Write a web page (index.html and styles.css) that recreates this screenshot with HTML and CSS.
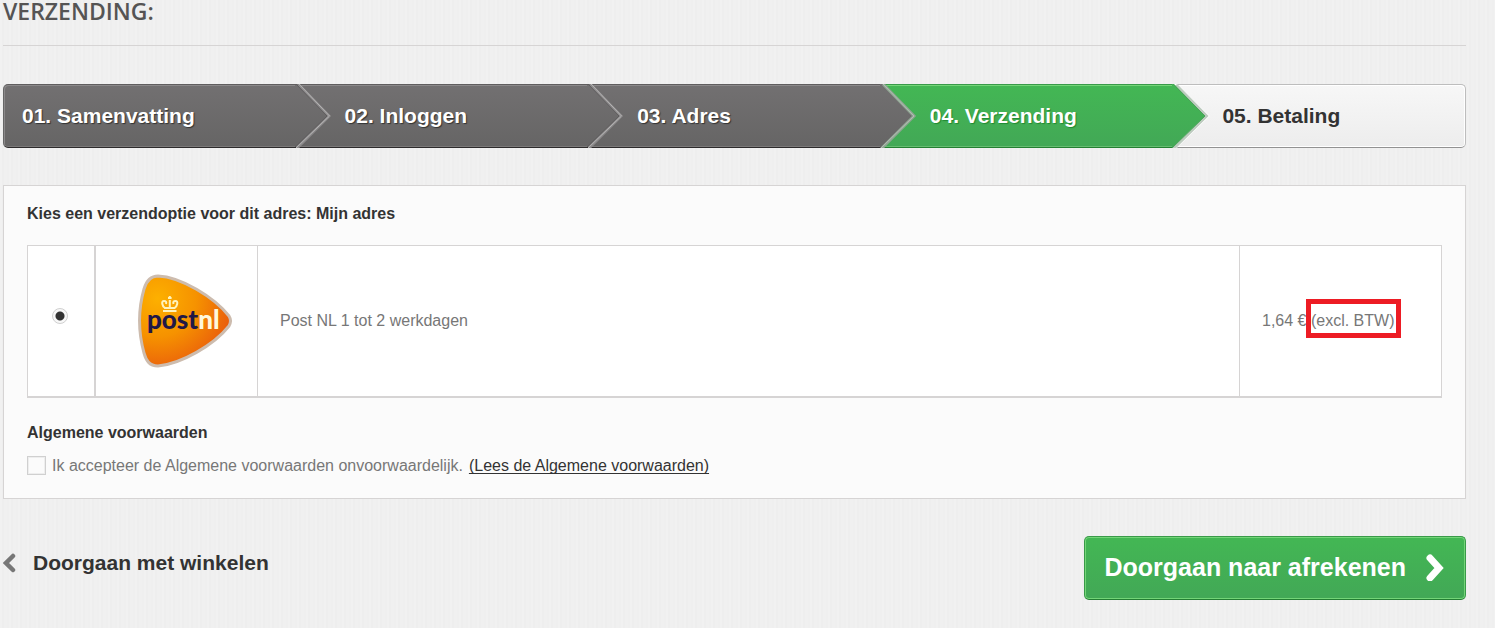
FILE: index.html
```
<!DOCTYPE html>
<html lang="nl">
<head>
<meta charset="utf-8">
<meta name="viewport" content="width=device-width, initial-scale=1">
<title>Verzending</title>
<link rel="stylesheet" href="styles.css">
</head>
<body>
<svg class="defs" width="0" height="0" aria-hidden="true">
  <defs>
    <linearGradient id="gray" x1="0" y1="0" x2="0" y2="1"><stop offset="0" stop-color="#727071"/><stop offset="1" stop-color="#666565"/></linearGradient>
    <linearGradient id="green" x1="0" y1="0" x2="0" y2="1"><stop offset="0" stop-color="#43b754"/><stop offset="1" stop-color="#42a856"/></linearGradient>
  </defs>
</svg>
<main class="page">
  <h1 class="page-title">Verzending:</h1>

  <ol class="steps">
    <li class="step done"><span>01. Samenvatting</span></li>
    <li class="step done">
      <svg class="arrow" viewBox="0 0 38 64" aria-hidden="true"><path d="M0 1H3L34 32L1 63H0Z" fill="url(#gray)"/><path d="M3 0L34 32L2 64" fill="none" stroke="#8b898a" stroke-width="3"/><path d="M4 0L34.500 32L1 64" fill="none" stroke="#b5b4b4"/><path d="M1 0L32 32L0 63" fill="none" stroke="#5f5d5e"/></svg>
      <span>02. Inloggen</span></li>
    <li class="step done">
      <svg class="arrow" viewBox="0 0 38 64" aria-hidden="true"><path d="M0 1H3L34 32L1 63H0Z" fill="url(#gray)"/><path d="M3 0L34 32L2 64" fill="none" stroke="#8b898a" stroke-width="3"/><path d="M4 0L34.500 32L1 64" fill="none" stroke="#b5b4b4"/><path d="M1 0L32 32L0 63" fill="none" stroke="#5f5d5e"/></svg>
      <span>03. Adres</span></li>
    <li class="step current" aria-current="step">
      <svg class="arrow" viewBox="0 0 38 64" aria-hidden="true"><path d="M0 0H3L34 32L1 64H0Z" fill="url(#gray)"/><path d="M3 0L34 32L2 64" fill="none" stroke="#8fa592" stroke-width="3"/><path d="M3 0L34 32L1 64" fill="none" stroke="#b4bdb5"/></svg>
      <span>04. Verzending</span></li>
    <li class="step todo">
      <svg class="arrow" viewBox="0 0 38 64" aria-hidden="true"><path d="M2 0L35 32L2 64" fill="#fff" stroke="#fff" stroke-width="4"/><path d="M4 1L34.500 32L2 64" fill="none" stroke="#bccbbe" stroke-width="3"/><path d="M0 0H2L33 32L0 64Z" fill="url(#green)"/><path d="M1 0L33 32L0 64" fill="none" stroke="#4aa259"/></svg>
      <span>05. Betaling</span></li>
  </ol>

  <form class="form">
    <section class="panel">
      <h2 class="label">Kies een verzendoptie voor dit adres: Mijn adres</h2>
      <table class="options">
        <tbody>
          <tr>
            <td class="col-radio"><input class="radio" type="radio" id="postnl" name="carrier" checked></td>
            <td class="col-logo">
              <svg class="logo" viewBox="0 0 94 94" role="img" aria-label="PostNL">
                <defs>
                  <radialGradient id="orange" cx=".2" cy=".25" r=".85"><stop offset="0" stop-color="#fdb000"/><stop offset=".5" stop-color="#f69200"/><stop offset="1" stop-color="#e95b0c"/></radialGradient>
                </defs>
                <path d="M20 2C43 3 76 23 91 42Q94 47 91 52C76 71 43 90 20 92C11 92 8 86 6 79C0 57 0 36 6 15C8 8 12 2 20 2Z" fill="url(#orange)" stroke="#cdbcae" stroke-width="3"/>
                <g fill="none" stroke="#fff3bd" stroke-width="2"><path d="M25 37H38.500M27 34C24 32 23 27 26 27Q29 27 28 30M36.500 34C39.500 32 40.500 27 37.500 27Q34.500 27 35.500 30M26 34H37.500M31.800 26V34M30 24H33.600M31.800 22V25"/></g>
                <text class="logo-text" x="9" y="55"><tspan fill="#211747">post</tspan><tspan fill="#fff8dc">nl</tspan></text>
              </svg>
            </td>
            <td class="col-name"><label for="postnl">Post NL 1 tot 2 werkdagen</label></td>
            <td class="col-price">1,64 € <span class="marked">(excl. BTW)</span></td>
          </tr>
        </tbody>
      </table>
      <h2 class="label">Algemene voorwaarden</h2>
      <p class="terms">
        <input class="check" type="checkbox" id="terms">
        <label for="terms">Ik accepteer de Algemene voorwaarden onvoorwaardelijk.</label>
        <a href="#voorwaarden">(Lees de Algemene voorwaarden)</a>
      </p>
    </section>

    <div class="actions">
      <a class="back" href="#winkel">
        <svg class="back-icon" viewBox="0 0 14 20" aria-hidden="true"><path d="M10 3L3 10L10 17" fill="none" stroke="#777" stroke-width="4.500" stroke-linecap="round"/></svg>
        Doorgaan met winkelen
      </a>
      <button class="next" type="submit">
        Doorgaan naar afrekenen
        <svg class="next-icon" viewBox="0 0 20 28" aria-hidden="true"><path d="M5 5L14 15L5 25" fill="none" stroke="#fff" stroke-width="7" stroke-linecap="round"/></svg>
      </button>
    </div>
  </form>
</main>
</body>
</html>
```
FILE: styles.css
```
* { box-sizing: border-box; }

body {
  margin: 0;
  color: #777;
  font: 16px/20px "Liberation Sans", Arial, sans-serif;
  background: #efefef repeating-linear-gradient(90deg, #f1f1f1 0 2px, #eee 2px 4px, #f0f0f0 4px 7px, #efefef 7px 9px);
}

.defs { position: absolute; }

.page { padding: 0 29px 28px 3px; }

.page-title {
  margin: 0 0 38px;
  padding-bottom: 23px;
  border-bottom: 1px solid #d6d4d4;
  color: #555454;
  font: 600 23px/22px "Open Sans", sans-serif;
  text-transform: uppercase;
}

.steps {
  display: grid;
  grid-template-columns: repeat(5, 1fr);
  margin: 0 0 37px;
  padding: 0;
  list-style: none;
}

.step {
  position: relative;
  display: flex;
  align-items: center;
  height: 64px;
  padding-left: 49px;
  border: solid;
  border-width: 1px 0;
  font-size: 21px;
  font-weight: bold;
}

.step:first-child {
  padding-left: 18px;
  border-left-width: 1px;
  border-radius: 5px 0 0 5px;
}

.step:last-child {
  border-right-width: 1px;
  border-radius: 0 5px 5px 0;
}

.done {
  color: #fff;
  text-shadow: 1px 1px 1px #333;
  background: linear-gradient(#727071, #666565);
  border-color: #5f5d5e #666 #2d2b2c;
  box-shadow: inset 0 1px #8b898a, inset 0 -1px #7b7979;
}

.done:first-child { box-shadow: inset 1px 1px #8b898a, inset 0 -1px #7b7979; }

.current {
  color: #fff;
  text-shadow: 1px 1px 1px #208931;
  background: linear-gradient(#43b754, #42a856);
  border-color: #399a49 #399a49 #247f32;
  box-shadow: inset 0 1px #74d578, inset 0 -1px #65bd70;
}

.todo {
  color: #333;
  background: linear-gradient(#f7f7f7, #ededed);
  border-color: #bdbdbd #bdbdbd #929292;
  box-shadow: inset -1px 1px #fff, inset 0 -1px #fff;
}

.arrow {
  position: absolute;
  top: -1px;
  left: -1px;
  width: 38px;
  height: 64px;
}

.panel {
  padding: 18px 23px 22px;
  border: 1px solid #d6d4d4;
  background: #fbfbfb;
}

.label {
  margin: 0;
  color: #333;
  font-size: 16px;
  line-height: 20px;
}

.options {
  width: 100%;
  margin: 21px 0 25px;
  border: 1px solid #d6d4d4;
  border-bottom-width: 2px;
  border-spacing: 0;
  background: #fff;
}

.options td {
  height: 150px;
  padding: 0 22px;
  border-right: 1px solid #d6d4d4;
}

.options td:last-child { border-right: 0; }

.options .col-radio {
  width: 68px;
  padding: 0 0 12px;
  border-right-width: 2px;
  text-align: center;
}

.options .col-logo { width: 162px; padding: 0 0 0 42px; }
.options .col-price { width: 201px; white-space: nowrap; }

.radio {
  width: 16px;
  height: 16px;
  margin: 0 3px 0 0;
  border: 1px solid #d0d0d0;
  border-radius: 50%;
  appearance: none;
  vertical-align: middle;
}

.radio:checked { background: radial-gradient(circle, #333 4px, #f8f8f8 5px); }

.logo { display: block; width: 94px; height: 94px; }
.logo-text { font: 900 26px Lato, sans-serif; }

.marked { position: relative; }

.marked::after {
  position: absolute;
  inset: -13px -7px -9px -5px;
  border: 5px solid #ed1c24;
  content: "";
}

.terms {
  display: flex;
  flex-wrap: wrap;
  align-items: flex-start;
  gap: 6px;
  margin: 13px 0 0;
}

.check {
  width: 19px;
  height: 19px;
  margin: 0;
  border: 1px solid #d0d0d0;
  background: #fbfbfb;
  box-shadow: inset 0 0 0 1px #eee;
  appearance: none;
}

.check:checked { background: #777; }

.terms a { color: #333; text-underline-offset: 2px; text-decoration-skip-ink: none; }

.actions {
  display: flex;
  justify-content: space-between;
  align-items: flex-start;
  margin-top: 37px;
}

.back {
  display: flex;
  align-items: center;
  gap: 16px;
  padding-top: 17px;
  color: #333;
  font-size: 21px;
  font-weight: bold;
  text-decoration: none;
}

.back-icon { width: 14px; height: 20px; }

.next {
  display: flex;
  align-items: center;
  gap: 19px;
  height: 64px;
  padding: 0 20px 3px;
  border: 1px solid #399a49;
  border-bottom-color: #247f32;
  border-radius: 5px;
  color: #fff;
  font: bold 25px/30px "Liberation Sans", Arial, sans-serif;
  background: linear-gradient(#43b754, #42a856);
  box-shadow: inset 0 0 0 1px #74d578;
}

.next-icon { width: 20px; height: 28px; }
```
